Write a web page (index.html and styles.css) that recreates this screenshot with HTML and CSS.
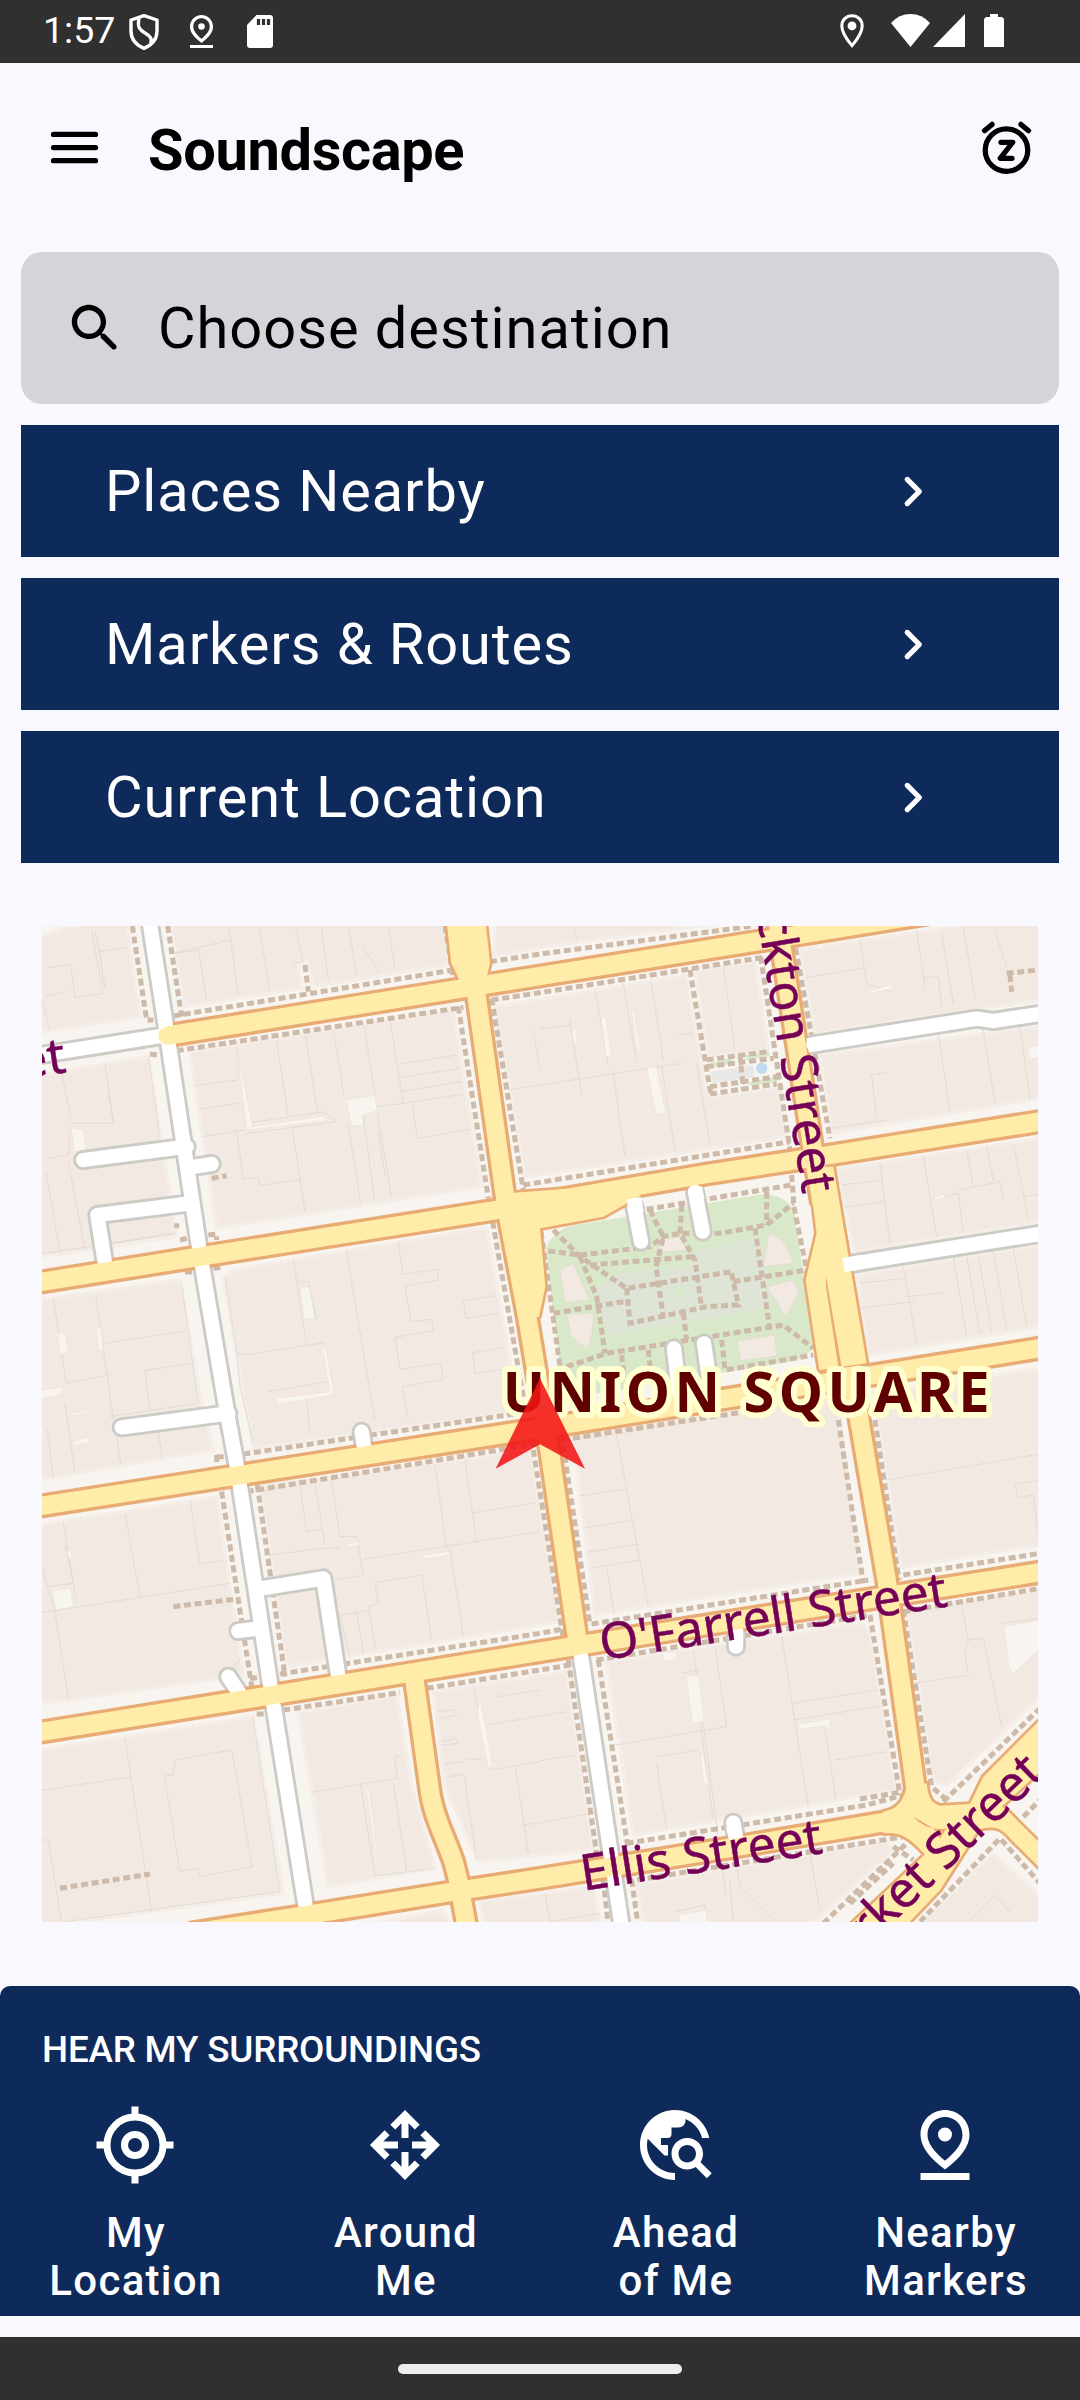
FILE: index.html
```html
<!DOCTYPE html>
<html lang="en">
<head>
<meta charset="utf-8">
<title>Soundscape</title>
<link rel="stylesheet" href="styles.css">
</head>
<body>
<div class="status-bar">
  <span class="clock">1:57</span>
  <svg class="st-shield" viewBox="0 0 30 36"><path d="M15 1.600 28 6v11c0 8-5 14-13 17.400C7 31 2 25 2 17V6z M10 4.500c-2 9 1 11.500 6 14.500 5 3 7.500 5.500 5.500 10.500" fill="none" stroke="#fff" stroke-width="3.400" stroke-linejoin="round"/></svg>
  <svg class="st-pin" viewBox="5 2 14 20"><path fill="#fff" d="M12 4c1.930 0 5 1.400 5 5.150 0 2.160-1.720 4.670-5 7.320-3.280-2.650-5-5.170-5-7.320C7 5.400 10.070 4 12 4m0-2C8.730 2 5 4.460 5 9.150c0 3.120 2.330 6.410 7 9.850 4.670-3.440 7-6.730 7-9.850C19 4.460 15.270 2 12 2zm0 5a2 2 0 1 0 0 4 2 2 0 0 0 0-4zM5 20.200h14V22H5z"/></svg>
  <svg class="st-sd" viewBox="0 0 26 33"><path fill="#fff" d="M9.500 0H23a3 3 0 0 1 3 3v27a3 3 0 0 1-3 3H3a3 3 0 0 1-3-3V10z"/><path d="M11.500 4v6M16.500 4v6M21.500 4v6" stroke="#303030" stroke-width="3.200"/></svg>
  <svg class="st-place" viewBox="5 2 14 20"><path d="M12 3c3.500 0 6 2.600 6 6 0 4.300-3.500 8.600-6 11.600C9.500 17.600 6 13.300 6 9c0-3.400 2.500-6 6-6z" fill="none" stroke="#fff" stroke-width="1.800"/><circle cx="12" cy="9" r="2.600" fill="#fff"/></svg>
  <svg class="st-wifi" viewBox="0 0 39 33"><path fill="#fff" d="M0 9Q8 0 19.500 0T39 9L19.500 33z"/></svg>
  <svg class="st-signal" viewBox="0 0 32 33"><path fill="#fff" d="M32 0v33H0z"/></svg>
  <svg class="st-battery" viewBox="0 0 20 33"><path fill="#fff" d="M6 0h8v3h4l2 2v28H0V5l2-2h4z"/></svg>
</div>

<header class="app-bar">
  <svg class="icon" viewBox="0 0 24 24"><path d="M4 7h16M4 12h16M4 17h16" stroke="#000" stroke-width="2" stroke-linecap="round"/></svg>
  <h1 class="title">Soundscape</h1>
  <svg class="icon" viewBox="0 0 24 24"><g fill="none" stroke="#000" stroke-width="2" stroke-linecap="round" stroke-linejoin="round"><circle cx="12" cy="13" r="8.100"/><path d="M3.600 5.600 6.500 3.200M20.400 5.600 17.500 3.200M9.900 10h4.500l-4.800 6.100h4.500"/></g></svg>
</header>

<main class="content">
  <div class="search">
    <svg class="icon" viewBox="0 0 24 24"><path d="M15.500 14h-.79l-.28-.27c1.200-1.400 1.820-3.310 1.480-5.340-.47-2.780-2.790-5-5.590-5.340-4.230-.52-7.790 3.040-7.270 7.270.34 2.800 2.560 5.120 5.340 5.590 2.030.34 3.940-.28 5.340-1.480l.27.28v.79l4.250 4.250c.41.41 1.080.41 1.490 0 .41-.41.41-1.080 0-1.490L15.500 14zm-6 0C7.010 14 5 11.990 5 9.500S7.010 5 9.500 5 14 7.010 14 9.500 11.990 14 9.500 14z"/></svg>
    <span class="search-text">Choose destination</span>
  </div>
  <div class="nav-row"><span>Places Nearby</span><svg class="icon" viewBox="0 0 24 24"><path d="M10 7.400 14.600 12 10 16.600" fill="none" stroke="#fff" stroke-width="2" stroke-linecap="round" stroke-linejoin="round"/></svg></div>
  <div class="nav-row"><span>Markers &amp; Routes</span><svg class="icon" viewBox="0 0 24 24"><path d="M10 7.400 14.600 12 10 16.600" fill="none" stroke="#fff" stroke-width="2" stroke-linecap="round" stroke-linejoin="round"/></svg></div>
  <div class="nav-row"><span>Current Location</span><svg class="icon" viewBox="0 0 24 24"><path d="M10 7.400 14.600 12 10 16.600" fill="none" stroke="#fff" stroke-width="2" stroke-linecap="round" stroke-linejoin="round"/></svg></div>
</main>

<svg class="map" viewBox="6 18 2988 2988">
  <defs>
    <g id="yellow-roads">
      <path d="M382 347 1500 168 2190 58 2700-24"/>
      <path d="M-10 1088 480 1010 1400 865 2000 762 2350 708 3010 603"/>
      <path d="M-10 1760 600 1665 1500 1525 3010 1283"/>
      <path d="M-10 2438 700 2325 1500 2195 2535 2030 3010 1955"/>
      <path d="M450 3040 800 2985 1270 2910 1500 2875 2060 2785 2540 2705"/>
      <path d="M1280 0 1310 230 1400 865 1460 1180 1530 1600 1612 2160"/>
      <path d="M2212 0 2320 700 2345 850M2435 1340 2458 1500 2540 1980 2630 2630"/>
      <path d="M1122 2270 1168 2600C1178 2690 1220 2760 1242 2830L1257 2890 1280 3020"/>
    </g>
    <g id="yellow-areas">
      <path d="M1218-10 1234 130 1258 180 1310 230 1340 170 1350 130 1335-10z"/>
      <path d="M1382 880 1434 1190 1497 1190 1516 1100 1500 925 1690 890 1800 828V790L1400 820z"/>
      <path d="M2305 740 2330 940 2297 1080 2338 1350 2480 1330 2380 740z"/>
      <path d="M2600 2600C2590 2645 2570 2668 2530 2675V2740C2580 2735 2605 2750 2655 2803L2430 3015H2600L2700 2910 2815 2730C2865 2712 2890 2730 2910 2755L3010 2855V2780L2940 2710C2910 2680 2900 2665 2885 2660L3010 2545V2390L2830 2570 2790 2652 2700 2657C2675 2650 2665 2635 2660 2590z"/>
    </g>
    <g id="white-roads">
      <path d="M-10 407 382 345"/>
      <path d="M328 0 382 347 480 1000 565 1500 590 1635 690 2290 798 2965"/>
      <path d="M1620 2190 1745 3020"/>
      <path d="M130 720 440 680M515 732 450 742M195 1030 172 885 450 850M245 1522 565 1480"/>
      <path d="M965 1535 972 1580M660 2006 850 1975 895 2270M595 2133 660 2125M565 2270 605 2330"/>
      <path d="M2088 2180V2130M2080 2708 2088 2755"/>
      <path d="M1783 860 1803 965M1965 815 1988 935M1902 1285 1920 1440M1992 1270 2015 1430"/>
      <path d="M2320 373 2810 296 2860 303 3010 280M2430 1032 3010 940"/>
    </g>
  </defs>
  <rect x="6" y="18" width="2988" height="2988" fill="#f8f4ef"/>

  <!-- building blocks -->
  <g class="blocks">
    <path d="M0 50 90 20 260 0 300 290 30 333 0 335z"/>
    <path d="M390 0H1215L1225 135 820 200 800 120 775 140 785 205 435 260z"/>
    <path d="M450 395 1240 270 1325 800 530 925z"/>
    <path d="M0 465 325 410 410 950 180 985 0 1010z"/>
    <path d="M0 1140 420 1080 485 1450 520 1590 0 1680z"/>
    <path d="M550 1075 580 1050 1340 922 1430 1440 1400 1480 640 1585z"/>
    <path d="M1365 0H2110L1500 82 1365 108z"/>
    <path d="M1365 260 1940 165 1995 500 2010 530 2220 505 2240 650 1500 765 1455 770z"/>
    <path d="M1965 150 2145 125 2185 390 2005 410z"/>
    <path d="M2280 90 3000-20V240L2325 340z"/>
    <path d="M2340 405 3000 320V535L2375 640z"/>
    <path d="M2390 748 3000 655V905L2445 995z"/>
    <path d="M2450 1065 3000 975V1220L2485 1305z"/>
    <path d="M2500 1420 3000 1345V1875L2585 1942z"/>
    <path d="M1600 1545 2390 1425 2460 1960 1665 2085z"/>
    <path d="M660 1700 1470 1590 1560 2105 740 2240z"/>
    <path d="M0 1815 530 1730 610 2265 90 2340 0 2350z"/>
    <path d="M0 2490 640 2390 730 2920 80 3010H0z"/>
    <path d="M775 2378 1070 2325 1115 2600 1185 2845 865 2900z"/>
    <path d="M1180 2315 1580 2255 1660 2790 1315 2825 1215 2600z"/>
    <path d="M1700 2225 2440 2112Q2485 2110 2490 2150L2570 2610 1780 2745z"/>
    <path d="M2600 2070 3000 2010V2330L2720 2595 2680 2580z"/>
    <path d="M1320 2945 1660 2900 1680 3010H1330z"/>
    <path d="M1010 3010 1210 2970 1230 3010z"/>
    <path d="M1790 2892 2540 2765 2560 2790 2320 3010H1810z"/>
    <path d="M2640 3010 2860 2800 3000 2930V3010z"/>
  </g>
  <!-- lot boundaries -->
  <g class="lots">
    <path d="M155 35 190 220 105 233 92 132 15 145M165 35 178 95 262 82M15 228 80 215M178 95 195 205M0 220 30 330"/>
    <path d="M565 18 572 60 400 100M475 85 500 240M572 60 595 225M658 18 688 210M765 18 790 125 760 130M845 25 865 180M925 18 950 165M968 80 1020 158M1045 18 1065 150M405 100 475 90"/>
    <path d="M465 497 590 480M475 568 595 550M488 650 615 630M590 380 600 470M710 365 745 590M797 345 832 575M880 330 912 525M972 315 1005 525M1050 300 1090 550 1012 560M1075 433 1252 405M1085 472 1258 445M1085 514 1265 485M1090 550 1273 522M1117 555 1132 655 1290 628M620 610 850 575M850 575 890 605 620 640M590 635 610 778 655 772 658 797 780 778M757 625 795 875M925 615 962 850M970 585 1003 840M1012 580 1055 832M1015 635 1035 765"/>
    <path d="M65 455 95 610 220 610 195 430M205 525 220 600M90 640 85 705 20 715M85 725 135 990M18 755 60 1000M325 410 360 655M215 970 405 940M0 1003 400 940"/>
    <path d="M40 1135 78 1385M167 1125 220 1500M190 1270 440 1233M425 1095 475 1450M455 1330 315 1352 330 1480M78 1390 205 1365M75 1450 105 1660M20 1520 40 1670M230 1550 242 1632M355 1540 368 1615M210 1490 470 1450"/>
    <path d="M555 1070 590 1298 615 1305 855 1268M760 1020 800 1278M780 1085 805 1085 830 1200M918 990 1005 1500M1075 965 1088 1063 1192 1048 1195 1080 1095 1098 1113 1205 1175 1198 1180 1232 1065 1252 1080 1348 1203 1330 1210 1378 1088 1400 1105 1500M1367 1127 1270 1142 1278 1195 1375 1180M1395 1282 1298 1298 1305 1360 1410 1345M800 1450 810 1540M590 1298 600 1400 640 1570M685 1415 865 1385"/>
    <path d="M1600 18 1610 60M1500 326 1590 315M1590 300 1625 530M1665 205 1705 440M1750 190 1790 425M1833 185 1870 420M1480 330 1500 450M1405 510 1500 495 1925 430M1720 465 1755 710M1865 440 1905 690M1970 430 2010 675M1915 345 1960 340M2050 140 2085 390"/>
    <path d="M2460 60 2480 190 2550 215M2300 172 2470 145M2630 30 2655 200M2650 175 2695 170 2705 260M2705 40 2740 250M2770 20 2805 235M2860 18 2900 140M2695 345 2730 570M2830 330 2865 550M2940 320 2970 540M2490 465 2540 458M2495 465 2510 595M2375 625 2540 600"/>
    <path d="M2520 730 2550 970M2405 795 2525 780M2415 862 2535 845M2650 710 2690 950M2690 835 2755 820 2770 940M2755 810 2880 785 2890 840M2780 690 2800 800M2840 680 2860 780M2920 670 2965 895M2950 830 3000 822M2590 1040 2630 1270M2460 1090 2590 1075M2460 1165 2620 1145M2600 1130 2715 1118M2740 1010 2780 1250M2780 1010 2820 1240M2815 1005 2855 1235M2860 990 2900 1230M2920 985 2960 1220"/>
    <path d="M2540 1680 3000 1602M3000 1680 2925 1692 2933 1733 2980 1725 2995 1850M1730 1545 1825 2060M1615 1728 1755 1708M1630 1825 1780 1800M1640 1897 1795 1872M1650 1945 1800 1920M1700 1940 1722 2080M1580 2200 1600 2300"/>
    <path d="M780 1700 800 1835 848 1828M825 1690 855 1875M875 1685 900 1850 950 1850 970 1965 885 1980M690 1905 850 1885 900 1885M968 1918 1500 1835M1185 1635 1220 1885M1275 1620 1310 1865M1300 1778 1480 1750M1005 1988 1145 1965 1175 2160M1230 1885 1270 2150M1005 1990 1015 2050 985 2060M985 2060 1008 2190M985 2072 900 2085 930 2210M950 2075 970 2200"/>
    <path d="M0 1925 45 2080 85 2335M0 2078 45 2072 570 1990M70 1805 110 2050M255 1780 300 2030M450 1740 480 1932 550 1922M75 1875 100 1990 20 2000M600 2215 570 2260"/>
    <path d="M255 2455 335 2975M0 2612 275 2570M638 2390 720 2915M400 2565 405 2520 575 2490 637 2840 480 2870 475 2845 420 2855 373 2568 400 2565M0 2760 25 2760 65 3010M75 3005 720 2915"/>
    <path d="M815 2617 1072 2575 1063 2510 1085 2508M962 2595 1005 2868M1060 2590 1100 2855M1005 2868 1180 2845M1190 2375 1240 2370 1250 2385 1200 2395M1205 2465 1250 2455 1255 2470 1205 2475M1215 2532 1270 2525 1280 2515 1330 2520M1300 2300 1350 2550 1500 2525M1225 2570 1272 2563 1310 2820M1425 2535 1465 2800M1450 2715 1500 2708 1655 2680M1340 2415 1580 2375M1370 2330 1500 2310M1500 2522 1605 2505"/>
    <path d="M1960 2190 2058 2925M2025 2180 2060 2420 1725 2475M2225 2150 2305 2660M2255 2350 2510 2310M2260 2400 2520 2358M2355 2425 2388 2640M2385 2520 2540 2495M1925 2260 1970 2250 1985 2440 2020 2700M1850 2510 1975 2490M1850 2530 1880 2728M2620 2290 2785 2265 2775 2200 2785 2160 2830 2155 2885 2420M2765 2055 2785 2160M2880 2110 3000 2095M2580 2870 3000 2450"/>
    <path d="M2310 2800 2340 2970M2070 2880 2080 3010M2090 2840 2100 2900 2210 3010M1905 2975 1995 2955 2000 3010M2780 3010 2865 2925 2915 2980M1515 2920 1530 3010M1530 3005 1680 2980"/>
  </g>
  <!-- courtyards -->
  <g class="yards">
    <path d="M918 540 1005 525 1012 572 968 585 970 615 935 618z"/>
    <path d="M590 380 638 620 850 588 862 602 620 630z"/>
    <path d="M85 540 98 625 130 628 138 690 102 695z"/>
    <path d="M780 1105 808 1100 825 1195 792 1198z"/>
    <path d="M52 1242 75 1238 85 1300 60 1303zM168 1225 182 1222 190 1290 175 1292z"/>
    <path d="M705 1435 870 1415 848 1285 858 1283 882 1425 712 1453z"/>
    <path d="M0 1410 65 1402 65 1425 0 1435zM90 1480 135 1472 137 1480 92 1487zM100 1563 148 1552 150 1568 104 1577z"/>
    <path d="M1682 290 1697 290 1715 407 1698 410zM1774 275 1782 273 1802 393 1792 393zM1820 445 1850 440 1877 578 1848 582zM1595 330 1610 325 1612 372 1602 370z"/>
    <path d="M2490 210 2555 195 2558 207 2493 218zM2963 385 3000 375V410L2968 418zM2682 830 2715 822V832L2685 840z"/>
    <path d="M38 2013 92 2005 100 2060 48 2070zM918 1873 955 1865V1875L920 1885zM1147 1907 1230 1893V1905L1150 1917zM82 1892 92 1890 96 1915 86 1917z"/>
    <path d="M1318 2345 1322 2343 1358 2540 1345 2545 1312 2380zM978 2605 1058 2592V2597L988 2610 1010 2790 1003 2790z"/>
    <path d="M1938 2270 1975 2265 1993 2405 1958 2410zM1980 2500 1990 2498 2005 2590 1993 2592zM2275 2412 2370 2397V2432L2352 2418 2278 2428z"/>
    <path d="M2892 2120 3000 2100V2185L2922 2260 2907 2245zM1915 2985 2000 2970V3010H1920zM1865 2195H1910V2220L1875 2222z"/>
  </g>
  <!-- squares and gardens -->
  <path class="park" d="M1518 990Q1530 940 1590 918L2170 822Q2240 825 2262 875L2322 1280Q2290 1320 2250 1325L1580 1435 1560 1340z"/>
  <path fill="#dee4d6" d="M1720 1070 1960 1000 2160 950 2195 1165 1705 1245 1665 1110z"/>
  <g fill="#f2e9e2" stroke="#dfd8cf" stroke-width="2">
    <path d="M1560 1050 1600 1030 1648 1140 1575 1148zM1580 1182 1660 1180Q1660 1250 1642 1288L1595 1250zM2187 940Q2245 960 2258 1030L2170 1040zM2180 1100 2260 1080 2275 1120 2237 1190zM2092 1262 2203 1245 2212 1308 2102 1322zM1870 955 1920 952 1940 990 1848 998z"/>
  </g>
  <circle cx="1918" cy="1114" r="17" class="park"/>
  <path class="park" d="M2010 430 2075 415 2080 430 2015 442zM2115 405 2185 394 2190 408 2118 420zM2125 487 2210 470 2213 485 2130 497zM1730 1040 1950 1020 1955 1040 1730 1055z"/>
  <path fill="#eae8e6" d="M2010 455 2140 435 2145 470 2020 490z"/>

  <!-- footways -->
  <g class="foot">
    <path d="M277 18 320 300 340 300M383 18 425 290M400 288 1240 150M795 135 805 215M410 392 1270 262M330 402 360 406M1215 18 1240 170M1350 125 1500 102 2140 18"/>
    <path d="M1255 260 1345 835M1355 235 1450 810M1355 240 1500 218 2170 112M1450 795 1500 787 2250 665M1358 905 1450 1430M1950 150 2012 520M2162 110 2250 690M2267 85 2370 655M2380 745 2480 1335"/>
    <path d="M515 775 560 767M410 910V925M420 960 440 955M505 945 530 942V960M435 1055 470 1058M520 1045 545 1042"/>
    <path d="M1500 920 1700 885M1820 868 2255 795M2255 765 2262 860 2300 1050 2335 1340M1503 935 1560 1340M2000 420 2180 395M2000 440 2200 415M2010 500 2210 470M2010 522 2210 492M2100 405 2110 510"/>
    <path d="M530 1610H560M530 1605V1630M610 1602 1450 1478M620 1715 1500 1570 2200 1462M545 1715 635 2300M652 1695 735 2270M400 2060 590 2037M630 2275 670 2272M720 2262 1500 2140 1580 2125M650 2382H680M730 2370 1080 2318M1160 2305 1500 2250 1590 2235"/>
    <path d="M1565 1545 1650 2115M1480 1590 1570 2155M1655 2112 2485 1980M2590 1965 3000 1900M1670 2220 2490 2085M2590 2075 3000 2005M2395 1500 2470 1990M2505 1500 2577 1980M2490 2085 2580 2625M2590 2070 2675 2600 2720 2640"/>
    <path d="M1585 2220 1670 2800M1675 2220 1765 2790M1690 2880 1705 3020M1775 2880 1795 3020M1760 2770 2480 2655 2590 2625M2460 2637 2590 2615M1760 2885 1900 2862 2590 2750M2350 3010 2600 2770M2430 2950 2560 2830M2560 2780 2620 2820M2710 2645 3000 2365M2640 3005 2880 2755 3000 2890M2950 2690 3000 2640M60 2905 330 2862M2900 160 2995 150M2910 165 2915 215"/>
    <path d="M1525 993 1620 1005 1830 980 1870 950 1920 940 2040 940 2180 915 2260 850M1540 930 1620 1010 1760 1105 2075 1055M1650 1035 1960 1010M1540 1180 1750 1145M1760 1105 1770 1210 2000 1160 2095 1155 2075 1060M2080 1085 2300 1050M1620 1010 1670 1130 1695 1300M1830 870 1870 950 1848 1040 1870 1190M1925 855 1920 940 1965 1020 1985 1165M2145 925 2190 1230M2180 815V915M1580 1340 1700 1300 2230 1215 2320 1285M1930 1180 1940 1260M2045 1260 2055 1350 2320 1305M1745 1305 1752 1370M1825 1290 1832 1360"/>
  </g>
  <circle cx="2165" cy="445" r="17" fill="#bfdaf2"/>

  <use href="#white-roads" class="w-case"/>
  <use href="#yellow-roads" class="y-case"/>
  <use href="#yellow-areas" class="a-case"/>
  <use href="#white-roads" class="w-fill"/>
  <use href="#yellow-roads" class="y-fill"/>
  <use href="#yellow-areas" class="a-fill"/>
  <circle cx="382" cy="347" r="27" fill="#ffeca9"/>
  <path d="M1782 835 1790 880M1965 803 1972 840M2303 376 2345 369M2411 1035 2460 1027M2088 2170V2130M2080 2720 2088 2755" stroke="#fff" stroke-width="43"/>
  <path d="M2358 1068 2405 1340 2395 1340 2358 1100zM2620 2690Q2660 2735 2720 2725L2700 2755 2680 2725z" fill="#e9ab74"/>

  <!-- street names -->
  <g class="street">
    <text transform="translate(82 456) rotate(-8.500)" text-anchor="end">Post Street</text>
    <text transform="translate(2288 824) rotate(80.700)" text-anchor="end">Stockton Street</text>
    <text transform="translate(1687 2221) rotate(-8.900)" textLength="1052">O'Farrell Street</text>
    <text transform="translate(1630 2912) rotate(-8.900)" textLength="730">Ellis Street</text>
    <text transform="translate(3018 2565) rotate(-44)" text-anchor="end">Market Street</text>
  </g>
  <text class="district" x="1388" y="1475" textLength="1461">UNION SQUARE</text>
  <path d="M1500 1375 1635 1646 1500 1573 1367 1646z" fill="#f21414" fill-opacity=".87"/>
</svg>

<section class="panel">
  <h2 class="panel-title">HEAR MY SURROUNDINGS</h2>
  <div class="actions">
    <div class="action">
      <svg viewBox="0 0 24 24"><g fill="none" stroke="#fff" stroke-width="2"><circle cx="12" cy="12" r="8"/><circle cx="12" cy="12" r="3"/><path d="M12 1v3M12 20v3M1 12h3M20 12h3"/></g></svg>
      <span>My<br>Location</span>
    </div>
    <div class="action">
      <svg viewBox="0 0 24 24"><g fill="none" stroke="#fff" stroke-width="2"><path id="arm" d="M8.500 6.900 12 3.400l3.500 3.500M12 3.400V10"/><use href="#arm" transform="rotate(90 12 12)"/><use href="#arm" transform="rotate(180 12 12)"/><use href="#arm" transform="rotate(270 12 12)"/></g></svg>
      <span>Around<br>Me</span>
    </div>
    <div class="action">
      <svg viewBox="0 0 24 24"><path fill="#fff" d="M19.300 16.900c.4-.7.7-1.500.7-2.400 0-2.500-2-4.500-4.500-4.500S11 12 11 14.500s2 4.500 4.500 4.500c.9 0 1.700-.3 2.400-.7l3.200 3.200 1.400-1.400-3.200-3.200zm-3.800.1c-1.400 0-2.500-1.100-2.500-2.500s1.100-2.500 2.500-2.500 2.500 1.100 2.500 2.500-1.100 2.500-2.500 2.500zM12 20v2C6.480 22 2 17.520 2 12S6.480 2 12 2c4.840 0 8.870 3.440 9.800 8h-2.070c-.64-2.460-2.400-4.470-4.730-5.410V5c0 1.100-.9 2-2 2h-2v2c0 .55-.45 1-1 1H8v2h2v3H9l-4.790-4.790C4.080 10.790 4 11.380 4 12c0 4.410 3.590 8 8 8z"/></svg>
      <span>Ahead<br>of Me</span>
    </div>
    <div class="action">
      <svg viewBox="0 0 24 24"><path fill="#fff" d="M12 4c1.930 0 5 1.400 5 5.150 0 2.160-1.720 4.670-5 7.320-3.280-2.650-5-5.170-5-7.320C7 5.400 10.070 4 12 4m0-2C8.730 2 5 4.460 5 9.150c0 3.120 2.330 6.410 7 9.850 4.670-3.440 7-6.730 7-9.850C19 4.460 15.270 2 12 2zm0 5a2 2 0 1 0 0 4 2 2 0 0 0 0-4zM5 20h14v2H5z"/></svg>
      <span>Nearby<br>Markers</span>
    </div>
  </div>
</section>

<div class="gesture-bar"><div class="handle"></div></div>
</body>
</html>
```
FILE: styles.css
```css
* { box-sizing: border-box; }
body {
  margin: 0;
  width: 1080px;
  height: 2400px;
  overflow: hidden;
  display: flex;
  flex-direction: column;
  background: #f9f8ff;
  color: #000;
  font-family: Roboto, "Liberation Sans", sans-serif;
}
svg { display: block; flex: none; }
.icon { width: 63px; height: 63px; }

.status-bar {
  height: 63px;
  flex: none;
  display: flex;
  align-items: flex-start;
  padding-left: 43px;
  background: #303030;
  color: #fff;
}
.clock { width: 86px; font-size: 37.500px; line-height: 43px; padding-top: 9px; }
.st-shield { width: 30px; height: 36px; margin-top: 14px; }
.st-pin { width: 23px; height: 33px; margin: 15px 0 0 31px; }
.st-sd { width: 26px; height: 33px; margin: 15px 0 0 34px; }
.st-place { width: 24px; height: 34px; margin: 14px 0 0 567px; }
.st-wifi { width: 39px; height: 33px; margin: 14px 0 0 27px; }
.st-signal { width: 32px; height: 33px; margin: 14px 0 0 3px; }
.st-battery { width: 20px; height: 33px; margin: 14px 0 0 19px; }

.app-bar {
  height: 189px;
  flex: none;
  display: flex;
  align-items: center;
  padding: 0 42px 20px 43px;
}
.title {
  flex: 1;
  margin: 0 0 0 42px;
  font-size: 57.750px;
  line-height: 74px;
  font-weight: 700;
  letter-spacing: -.35px;
  padding-top: 4px;
}

.content {
  display: flex;
  flex-direction: column;
  gap: 21px;
  padding: 0 21px;
  flex: none;
}
.search {
  height: 152px;
  display: flex;
  align-items: center;
  padding-left: 43px;
  border-radius: 21px;
  background: #d4d5da;
}
.search-text {
  margin-left: 31px;
  font-size: 57.750px;
  letter-spacing: .97px;
}
.nav-row {
  height: 132px;
  display: flex;
  align-items: center;
  justify-content: space-between;
  padding: 0 115px 0 84px;
  background: #0e2a5a;
  color: #fff;
  font-size: 57.750px;
  letter-spacing: .9px;
}

.map {
  width: 996px;
  height: 996px;
  margin: 63px 42px 64px;
  overflow: hidden;
}
.blocks { fill: #f2e9e2; stroke: #f5eee8; stroke-width: 10; }
.lots { fill: none; stroke: #e2dbd5; stroke-width: 3; }
.yards { fill: #f8f4ef; stroke: #ebe2da; stroke-width: 2; }
.park { fill: #d9e8c9; }
.foot { fill: none; stroke: #cdbaa9; stroke-width: 15; stroke-dasharray: 21 11; }
.w-case { fill: none; stroke: #cccbc6; stroke-width: 60; stroke-linecap: round; stroke-linejoin: round; }
.w-fill { fill: none; stroke: #fff; stroke-width: 43; stroke-linecap: round; stroke-linejoin: round; }
.y-case { fill: none; stroke: #e9ab74; stroke-width: 75; stroke-linejoin: round; }
.y-fill { fill: none; stroke: #ffeca9; stroke-width: 55; stroke-linejoin: round; }
.a-case { fill: #ffeca9; stroke: #e9ab74; stroke-width: 16; stroke-linejoin: round; }
.a-fill { fill: #ffeca9; }
.street { font-family: "Noto Sans", "Open Sans", sans-serif; font-size: 150px; fill: #740057; stroke: #740057; stroke-width: 1.500; }
.district {
  font-family: "Noto Sans", "Open Sans", sans-serif;
  font-size: 168px;
  font-weight: 700;
  fill: #600000;
  stroke: #ffffd0;
  stroke-width: 34;
  stroke-linejoin: round;
  paint-order: stroke;
}

.panel {
  height: 330px;
  flex: none;
  padding-top: 42px;
  border-radius: 10px 10px 0 0;
  background: #0e2a5a;
  color: #fff;
}
.panel-title {
  margin: 0 0 22px 42px;
  font-size: 36.750px;
  line-height: 43px;
  height: 53px;
  font-weight: 500;
  letter-spacing: -.18px;
}
.actions { display: grid; grid-template-columns: repeat(4, 1fr); }
.action {
  display: flex;
  flex-direction: column;
  align-items: center;
  text-align: center;
  font-size: 42px;
  line-height: 48px;
  font-weight: 500;
  letter-spacing: 1.300px;
}
.action span { padding-left: 2px; }
.action svg { width: 84px; height: 84px; margin-bottom: 22px; }

.gesture-bar {
  height: 63px;
  flex: none;
  margin-top: 21px;
  padding-top: 27px;
  background: #303030;
}
.handle { width: 284px; height: 10px; margin: 0 auto; border-radius: 5px; background: #eee; }
```
